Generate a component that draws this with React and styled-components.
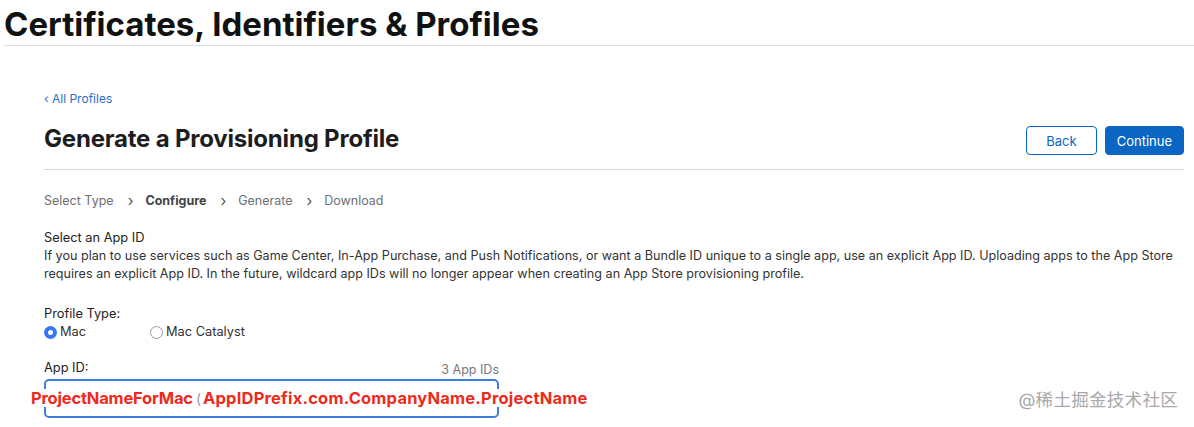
import React from 'react';
import styled, { createGlobalStyle } from 'styled-components';

const GlobalStyle = createGlobalStyle`
  body {
    margin: 0;
    background: #fff;
    font-family: Inter, "Liberation Sans", "Noto Sans CJK SC", sans-serif;
    color: #1d1d1f;
  }
`;

const Page = styled.div`
  width: 1194px;
  height: 427px;
  overflow: hidden;
  position: relative;
`;

const Header = styled.header`
  margin-left: 4px;
  height: 45px;
  border-bottom: 1px solid #dcdcdc;
`;

const PageTitle = styled.h1`
  margin: 0;
  padding-top: 4px;
  font-size: 33px;
  line-height: 40px;
  font-weight: 700;
  color: #111;
`;

const Main = styled.main`
  padding: 44px 10px 0 44px;
`;

const BackLink = styled.a`
  display: block;
  font-size: 12px;
  line-height: 18px;
  color: #2a6fc8;
  text-decoration: none;
`;

const TitleRow = styled.div`
  display: flex;
  align-items: flex-start;
  justify-content: space-between;
  margin-top: 16px;
  padding-bottom: 14px;
  border-bottom: 1px solid #d8d8d8;
`;

const FormTitle = styled.h2`
  margin: 0;
  font-size: 24px;
  line-height: 30px;
  font-weight: 700;
  letter-spacing: -0.2px;
  color: #1d1d1f;
`;

const Actions = styled.div`
  display: flex;
  gap: 8px;
  margin-top: 2px;
`;

const Button = styled.button`
  height: 29px;
  padding: 0 ${p => (p.$primary ? '11px' : '19px')};
  border-radius: 4px;
  font-family: inherit;
  font-size: 13px;
  border: 1px solid #0a66c2;
  background: ${p => (p.$primary ? '#0a66c2' : '#fff')};
  color: ${p => (p.$primary ? '#fff' : '#0a66c2')};
`;

const Steps = styled.ol`
  display: flex;
  align-items: center;
  list-style: none;
  margin: 0;
  padding: 22px 0 0;
  font-size: 12.5px;
  line-height: 18px;
  color: #6e6e73;
`;

const Step = styled.li`
  font-weight: ${p => (p.$active ? 700 : 400)};
  color: ${p => (p.$active ? '#444' : '#6e6e73')};
`;

const Chevron = styled.span`
  margin: 0 12px 0 14px;
  font-size: 15px;
  line-height: 18px;
  color: #555;
`;

const Section = styled.section`
  margin-top: 19px;
`;

const Label = styled.div`
  font-size: 12.8px;
  line-height: 18px;
  color: #222;
`;

const Para = styled.p`
  margin: 0;
  font-size: 12.6px;
  line-height: 18px;
  color: #333;
`;

const Field = styled.div`
  margin-top: ${p => p.$top || '0'};
  width: 455px;
`;

const RadioRow = styled.div`
  display: flex;
  align-items: center;
`;

const RadioOption = styled.label`
  display: flex;
  align-items: center;
  gap: 3px;
  width: ${p => p.$w || 'auto'};
  font-size: 12.8px;
  line-height: 18px;
  color: #333;
`;

const RadioDot = styled.span`
  width: 13px;
  height: 13px;
  border-radius: 50%;
  box-sizing: border-box;
  background: ${p => (p.$on ? '#3478f6' : '#fff')};
  border: ${p => (p.$on ? 'none' : '1px solid #9a9a9f')};
  display: flex;
  align-items: center;
  justify-content: center;
  &::after {
    content: '';
    display: ${p => (p.$on ? 'block' : 'none')};
    width: 5px;
    height: 5px;
    border-radius: 50%;
    background: #fff;
  }
`;

const FieldHead = styled.div`
  display: flex;
  justify-content: space-between;
  align-items: flex-end;
`;

const Count = styled.span`
  font-size: 12.5px;
  line-height: 14px;
  color: #777;
`;

const SelectWrap = styled.div`
  position: relative;
  margin-top: 2px;
  height: 39px;
  box-sizing: border-box;
  border: 2px solid #3a7ee0;
  border-radius: 5px;
`;

const Annot = styled.span`
  position: absolute;
  top: 8px;
  left: ${p => p.$left};
  background: #fff;
  padding: 0 1px;
  font-size: 16.5px;
  line-height: 18px;
  font-weight: 700;
  letter-spacing: ${p => (p.$wide ? '0.2px' : '-0.2px')};
  color: #ee2a1b;
  white-space: nowrap;
`;

const Paren = styled.span`
  position: absolute;
  top: 9px;
  left: 150px;
  font-size: 14px;
  color: #999;
`;

const Watermark = styled.div`
  position: absolute;
  right: 16px;
  bottom: 16px;
  font-size: 17.5px;
  color: #a8a8a8;
  letter-spacing: 0.3px;
`;

export default function App() {
  return (
    <Page>
      <GlobalStyle />
      <Header>
        <PageTitle>Certificates, Identifiers &amp; Profiles</PageTitle>
      </Header>
      <Main>
        <BackLink href="#">‹ All Profiles</BackLink>
        <TitleRow>
          <FormTitle>Generate a Provisioning Profile</FormTitle>
          <Actions>
            <Button>Back</Button>
            <Button $primary>Continue</Button>
          </Actions>
        </TitleRow>
        <Steps>
          <Step>Select Type</Step>
          <Chevron>›</Chevron>
          <Step $active>Configure</Step>
          <Chevron>›</Chevron>
          <Step>Generate</Step>
          <Chevron>›</Chevron>
          <Step>Download</Step>
        </Steps>
        <Section>
          <Label>Select an App ID</Label>
          <Para>
            If you plan to use services such as Game Center, In-App Purchase, and Push Notifications, or want a Bundle ID unique to a single app, use an explicit App ID. Uploading apps to the App Store requires an explicit App ID. In the future, wildcard app IDs will no longer appear when creating an App Store provisioning profile.
          </Para>
        </Section>
        <Field $top="22px">
          <Label>Profile Type:</Label>
          <RadioRow>
            <RadioOption $w="106px">
              <RadioDot $on />
              Mac
            </RadioOption>
            <RadioOption>
              <RadioDot />
              Mac Catalyst
            </RadioOption>
          </RadioRow>
        </Field>
        <Field $top="18px">
          <FieldHead>
            <Label>App ID:</Label>
            <Count>3 App IDs</Count>
          </FieldHead>
          <SelectWrap>
            <Paren>(</Paren>
            <Annot $left="-16px">ProjectNameForMac</Annot>
            <Annot $left="156px" $wide>AppIDPrefix.com.CompanyName.ProjectName</Annot>
          </SelectWrap>
        </Field>
      </Main>
      <Watermark>@稀土掘金技术社区</Watermark>
    </Page>
  );
}
